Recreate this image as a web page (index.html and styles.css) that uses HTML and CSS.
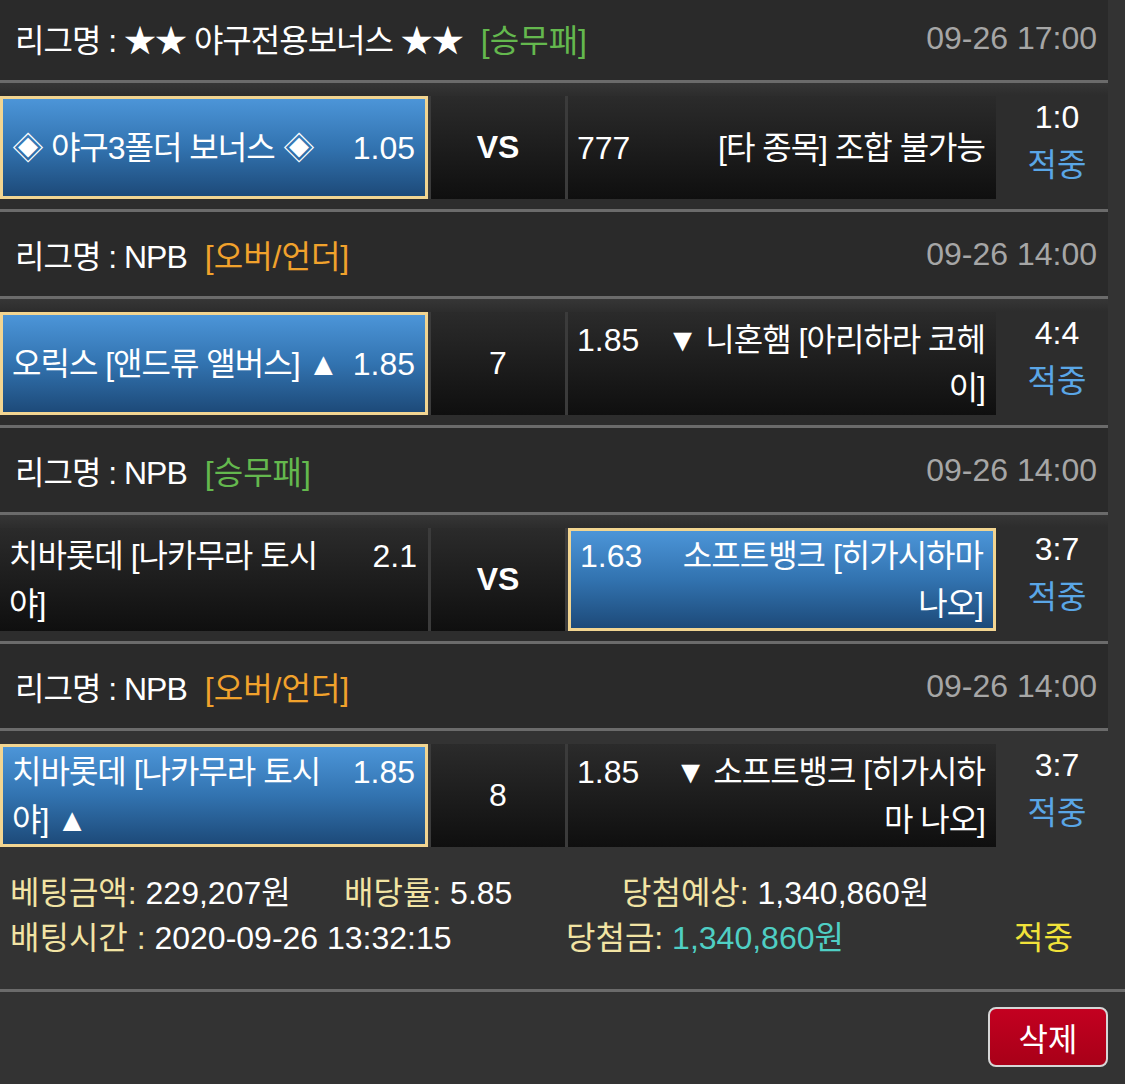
FILE: index.html
```html
<!DOCTYPE html>
<html lang="ko">
<head>
<meta charset="utf-8">
<title>베팅내역</title>
<link rel="stylesheet" href="styles.css">
</head>
<body>
<div class="page">
  <div class="list">
    <section class="game">
      <div class="league"><span class="ko">리그명 : ★★ 야구전용보너스 ★★</span><span class="type win">[승무패]</span><span class="time">09-26 17:00</span></div>
      <div class="match">
        <div class="cells">
          <div class="cell sel"><div class="in"><span class="team ko">◈ 야구3폴더 보너스 ◈</span><span class="odd">1.05</span></div></div>
          <div class="cell mid"><b>VS</b></div>
          <div class="cell"><div class="in"><span class="odd">777</span><span class="team away ko">[타 종목] 조합 불가능</span></div></div>
        </div>
        <div class="score"><div>1:0</div><div class="hit">적중</div></div>
      </div>
    </section>
    <section class="game">
      <div class="league"><span class="ko">리그명 : NPB</span><span class="type ou">[오버/언더]</span><span class="time">09-26 14:00</span></div>
      <div class="match">
        <div class="cells">
          <div class="cell sel"><div class="in"><span class="team ko">오릭스 [앤드류 앨버스] ▲</span><span class="odd">1.85</span></div></div>
          <div class="cell mid">7</div>
          <div class="cell"><div class="in"><span class="odd">1.85</span><span class="team away ko">▼ 니혼햄 [아리하라 코헤<br>이]</span></div></div>
        </div>
        <div class="score"><div>4:4</div><div class="hit">적중</div></div>
      </div>
    </section>
    <section class="game">
      <div class="league"><span class="ko">리그명 : NPB</span><span class="type win">[승무패]</span><span class="time">09-26 14:00</span></div>
      <div class="match">
        <div class="cells">
          <div class="cell"><div class="in"><span class="team ko">치바롯데 [나카무라 토시<br>야]</span><span class="odd">2.1</span></div></div>
          <div class="cell mid"><b>VS</b></div>
          <div class="cell sel"><div class="in"><span class="odd">1.63</span><span class="team away ko">소프트뱅크 [히가시하마<br>나오]</span></div></div>
        </div>
        <div class="score"><div>3:7</div><div class="hit">적중</div></div>
      </div>
    </section>
    <section class="game last">
      <div class="league"><span class="ko">리그명 : NPB</span><span class="type ou">[오버/언더]</span><span class="time">09-26 14:00</span></div>
      <div class="match">
        <div class="cells">
          <div class="cell sel"><div class="in"><span class="team ko">치바롯데 [나카무라 토시<br>야] ▲</span><span class="odd">1.85</span></div></div>
          <div class="cell mid">8</div>
          <div class="cell"><div class="in"><span class="odd">1.85</span><span class="team away ko">▼ 소프트뱅크 [히가시하<br>마 나오]</span></div></div>
        </div>
        <div class="score"><div>3:7</div><div class="hit">적중</div></div>
      </div>
    </section>
  </div>

  <div class="summary">
    <div class="sline">
      <span class="s1"><span class="lbl">베팅금액:</span> 229,207원</span>
      <span class="s2"><span class="lbl">배당률:</span> 5.85</span>
      <span><span class="lbl">당첨예상:</span> 1,340,860원</span>
    </div>
    <div class="sline">
      <span class="t1"><span class="lbl">배팅시간 :</span> 2020-09-26 13:32:15</span>
      <span class="t2"><span class="lbl">당첨금:</span> <span class="win-amt">1,340,860원</span></span>
      <span class="result">적중</span>
    </div>
  </div>

  <div class="actions">
    <button class="del" type="button">삭제</button>
  </div>
</div>
</body>
</html>
```

FILE: styles.css
```css
* { box-sizing: border-box; }

html, body {
  margin: 0;
  padding: 0;
  background: #333333;
}

body {
  font-family: "Liberation Sans", "Noto Sans CJK KR", sans-serif;
  font-size: 32px;
  color: #ffffff;
  width: 1125px;
  height: 1084px;
  overflow: hidden;
}

.ko { letter-spacing: -1px; }

.list {
  width: 1108px;
  margin-top: -4px;
}

.league {
  height: 87px;
  background: #2a2a2a;
  border-bottom: 3px solid #6b6b6b;
  display: flex;
  align-items: center;
  padding: 0 11px 0 15px;
  white-space: nowrap;
}

.type { margin-left: 18px; }
.type.win { color: #64b84e; }
.type.ou { color: #f1a22c; }

.time {
  margin-left: auto;
  color: #a6a6a6;
}

.match {
  display: flex;
  align-items: flex-start;
  padding: 13px 0 10px;
  background: linear-gradient(#363636, #2d2d2d 12px, #2d2d2d);
  border-bottom: 3px solid #6b6b6b;
}

.game.last .match { border-bottom: none; background: #333333; }

.cells {
  display: flex;
  gap: 3px;
  height: 103px;
  background: #3b3b3b;
}

.cell {
  width: 428px;
  height: 103px;
  display: flex;
  align-items: center;
  padding: 0 11px 0 9px;
  background: linear-gradient(#2b2b2b, #0f0f0f);
}

.cell.sel {
  border: 3px solid #f2d591;
  padding: 0 10px 0 9px;
  background: linear-gradient(#4c95d8, #3273b0 50%, #1d4a79);
}

.cell.mid {
  width: 134px;
  justify-content: center;
  padding: 0;
}

.cell.mid b { font-weight: bold; }

.in {
  width: 100%;
  display: flex;
  justify-content: space-between;
  align-items: flex-start;
  gap: 8px;
  line-height: 48px;
  white-space: nowrap;
}

.team.away { text-align: right; }
.odd { flex: none; }

.score {
  width: 112px;
  padding-left: 10px;
  margin-top: -3px;
  text-align: center;
  line-height: 48px;
}

.hit { color: #5aa6e6; }

.summary {
  padding: 14px 0 28px 10px;
  line-height: 45px;
}

.sline {
  display: flex;
  white-space: nowrap;
}

.s1 { width: 334px; }
.s2 { width: 278px; }
.t1 { width: 556px; }
.t2 { width: 448px; }

.lbl { color: #f2e4a4; }
.win-amt { color: #4fcfc4; }
.result { color: #f1e23a; }

.actions {
  border-top: 3px solid #6b6b6b;
  display: flex;
  justify-content: flex-end;
  padding: 15px 17px 0 0;
  height: 94px;
}

.del {
  width: 120px;
  height: 60px;
  border: 2px solid #d6d6d6;
  border-radius: 8px;
  background: linear-gradient(#c30020, #a80018);
  color: #ffffff;
  font-family: "Liberation Sans", "Noto Sans CJK KR", sans-serif;
  font-size: 32px;
  padding: 0;
}
```
